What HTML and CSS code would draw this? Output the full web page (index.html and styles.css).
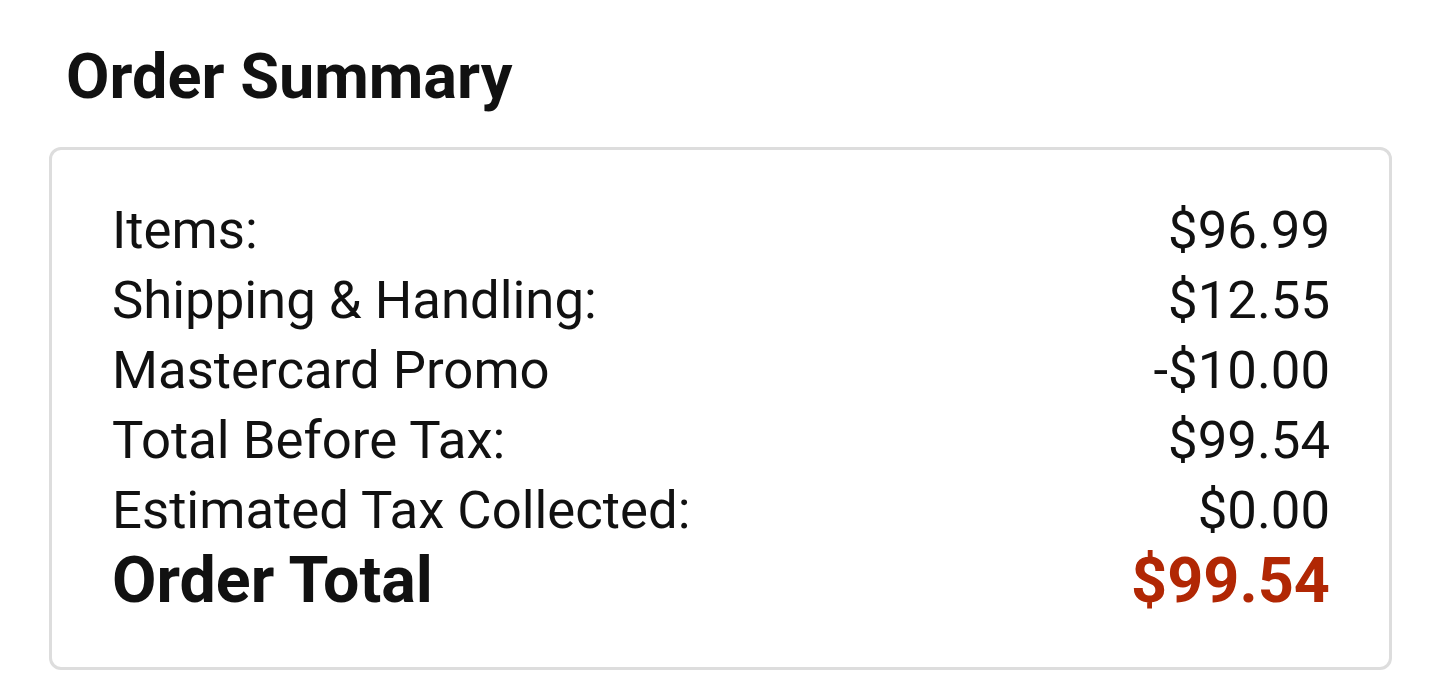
FILE: index.html
```html
<!DOCTYPE html>
<html lang="en">
<head>
<meta charset="utf-8">
<title>Order Summary</title>
<link rel="stylesheet" href="styles.css">
</head>
<body>
<main class="page">
  <h1 class="title">Order Summary</h1>
  <section class="summary">
    <div class="row"><span>Items:</span><span>$96.99</span></div>
    <div class="row"><span>Shipping &amp; Handling:</span><span>$12.55</span></div>
    <div class="row"><span>Mastercard Promo</span><span>-$10.00</span></div>
    <div class="row"><span>Total Before Tax:</span><span>$99.54</span></div>
    <div class="row"><span>Estimated Tax Collected:</span><span>$0.00</span></div>
    <div class="row total"><span>Order Total</span><span class="amount">$99.54</span></div>
  </section>
</main>
</body>
</html>
```

FILE: styles.css
```css
* { box-sizing: border-box; }
html, body { margin: 0; padding: 0; background: #fff; }
body {
  font-family: Roboto, "Liberation Sans", Arial, sans-serif;
  color: #111;
}
.page {
  padding: 41px 48px 0 49px;
}
.title {
  margin: 0 0 34px 17px;
  font-size: 63px;
  font-weight: 700;
  line-height: 72px;
}
.summary {
  border: 3px solid #ddd;
  border-radius: 12px;
  padding: 45px 59px 52px 60px;
  height: 523px;
}
.row {
  display: flex;
  justify-content: space-between;
  align-items: baseline;
  font-size: 52.7px;
  line-height: 70px;
}
.row.total {
  font-size: 64.5px;
  font-weight: 700;
}
.amount {
  color: #b12704;
  font-size: 63px;
}
```
